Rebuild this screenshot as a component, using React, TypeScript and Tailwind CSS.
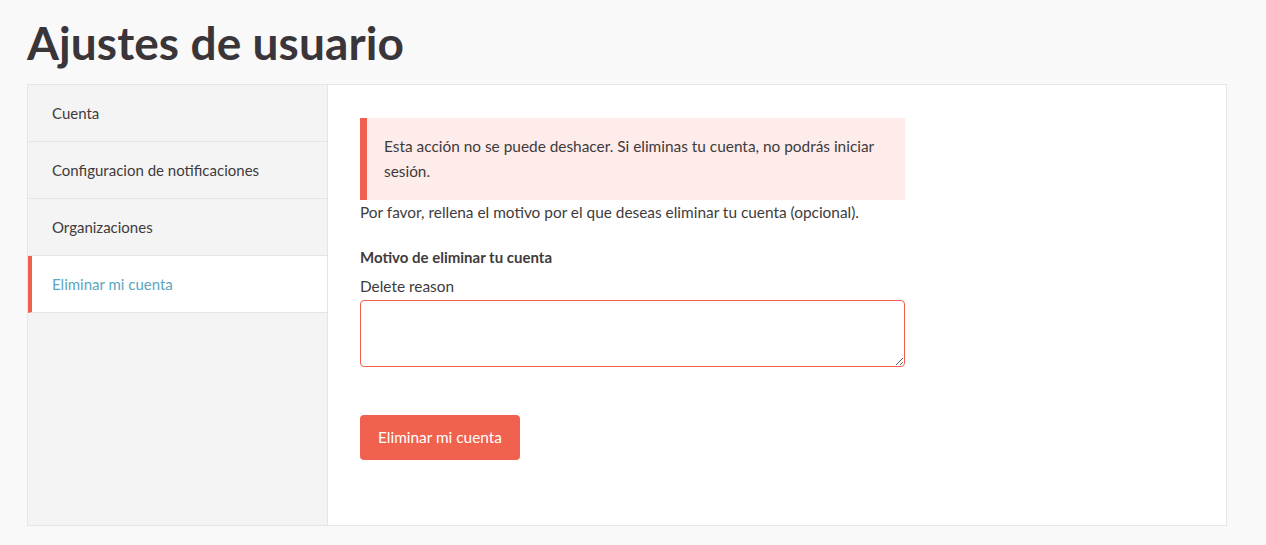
import { useState } from "react";

const menu = ["Cuenta", "Configuracion de notificaciones", "Organizaciones", "Eliminar mi cuenta"];

const App = () => {
     const [active] = useState<string>("Eliminar mi cuenta");
     const [reason, setReason] = useState<string>("");

     return (
          <div className="min-h-[545px] w-full bg-[#f9f9f9] text-[#3f3b3d] font-['Lato',sans-serif]">
               <div className="px-[27px] pt-[14px]">
                    <h1 className="text-[46px] leading-[58px] font-bold text-[#3a3538] mb-[12px] tracking-[0.1px]">Ajustes de usuario</h1>
                    <div className="flex w-[1200px] h-[442px] border border-[#e5e5e5] bg-white">
                         <div className="w-[300px] shrink-0 bg-[#f4f4f4] border-r border-[#e5e5e5]">
                              {menu.map((item) => (
                                   <div
                                        key={item}
                                        className={
                                             item === active
                                                  ? "h-[57px] flex items-center pl-[20px] border-l-4 border-l-[#f0604d] border-b border-b-[#e5e5e5] bg-white text-[#5ba5c2] text-[15px]"
                                                  : "h-[57px] flex items-center pl-[24px] border-b border-[#e5e5e5] text-[15px]"
                                        }
                                   >
                                        {item}
                                   </div>
                              ))}
                         </div>
                         <div className="flex-1 px-[32px] pt-[33px]">
                              <div className="w-[545px] border-l-[7px] border-[#f0604d] bg-[#fdecea] pl-[17px] pr-4 py-[16px] text-[15.4px] leading-[25px]">
                                   Esta acción no se puede deshacer. Si eliminas tu cuenta, no podrás iniciar sesión.
                              </div>
                              <p className="text-[15.4px] leading-[25px]">Por favor, rellena el motivo por el que deseas eliminar tu cuenta (opcional).</p>
                              <p className="mt-[20px] text-[15px] leading-[25px] font-bold">Motivo de eliminar tu cuenta</p>
                              <label className="block mt-[4px] text-[15.4px] leading-[25px]">Delete reason</label>
                              <textarea
                                   value={reason}
                                   onChange={(e) => setReason(e.target.value)}
                                   autoFocus
                                   className="block mt-[1px] w-[545px] h-[67px] border border-[#f0604d] rounded-[4px] px-2 py-2 outline-none text-[15px]"
                              />
                              <button className="mt-[48px] h-[45px] px-[18px] rounded-[4px] bg-[#f0624e] text-white text-[15.4px]">
                                   Eliminar mi cuenta
                              </button>
                         </div>
                    </div>
               </div>
          </div>
     );
};

export default App;
